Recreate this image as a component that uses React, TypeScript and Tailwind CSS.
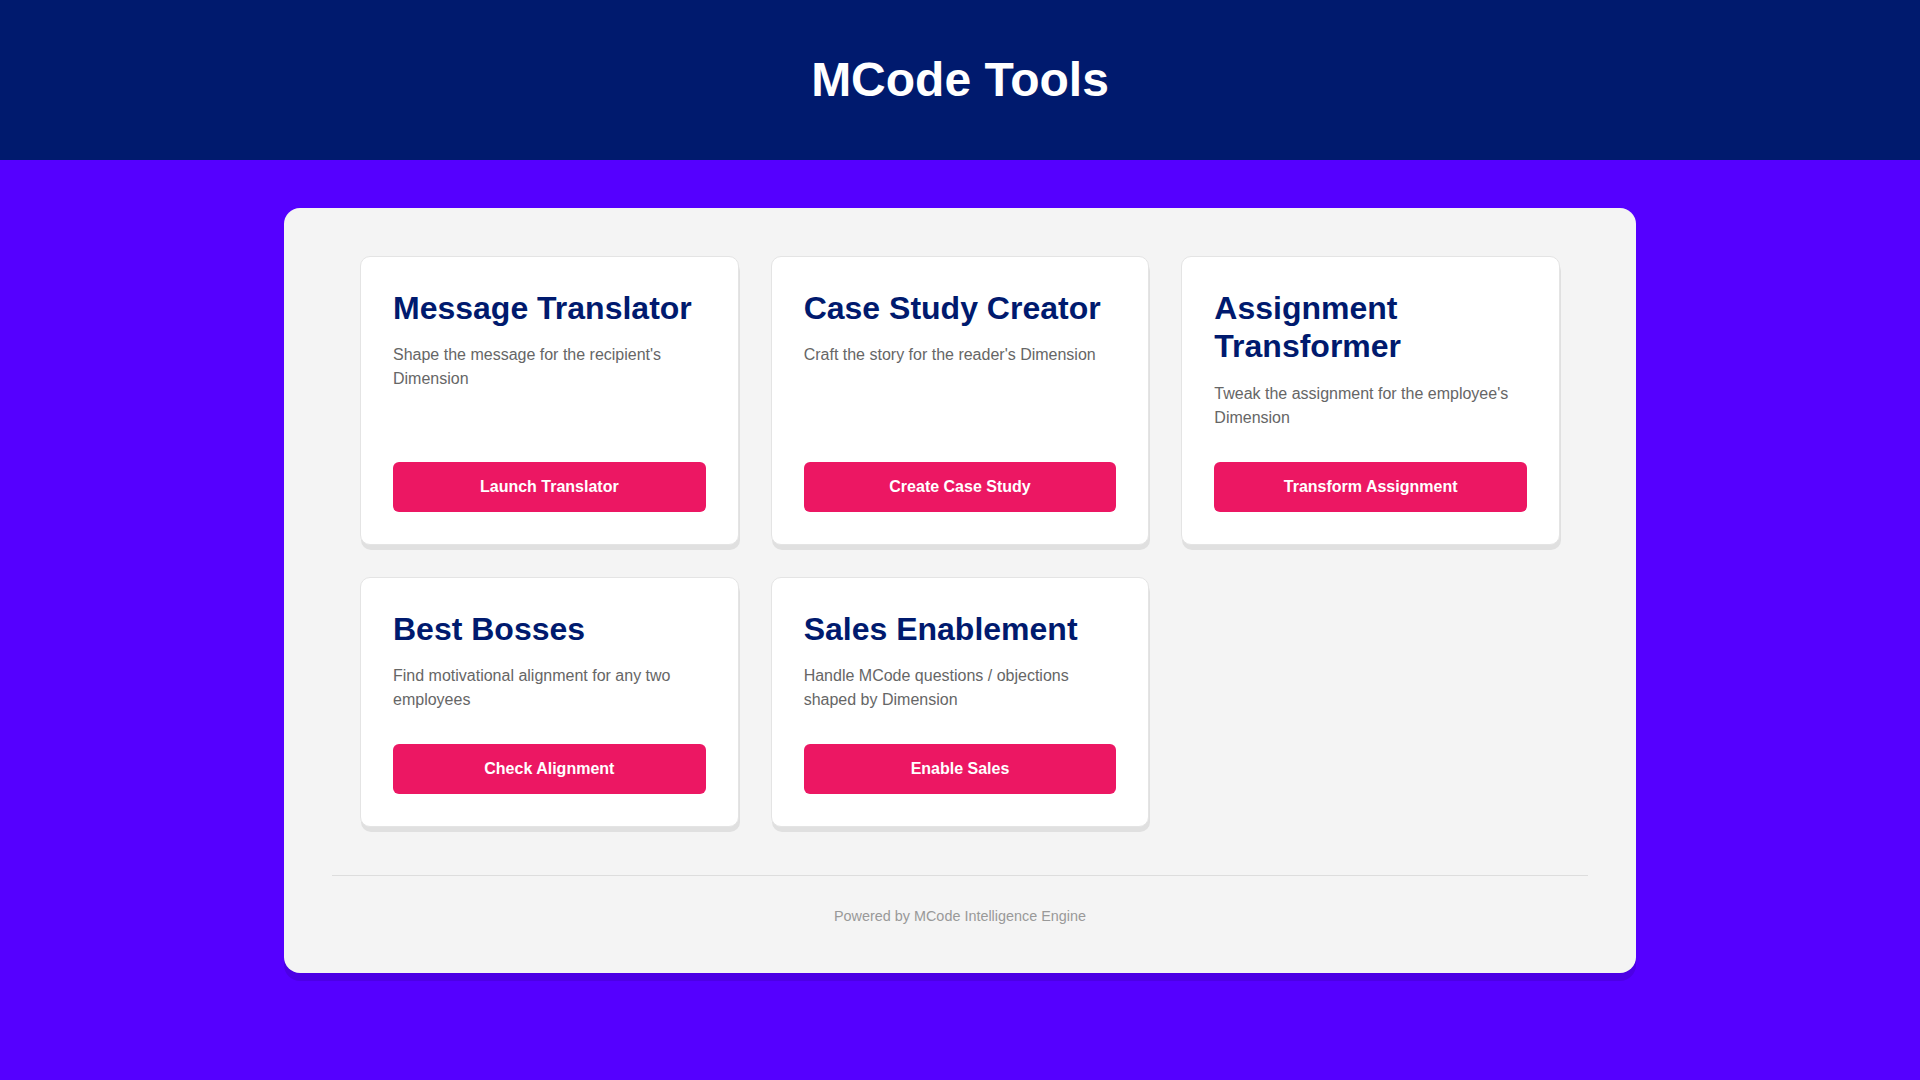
import React from "react";

const tools = [
  {
    title: "Message Translator",
    desc: "Shape the message for the recipient's Dimension",
    cta: "Launch Translator",
  },
  {
    title: "Case Study Creator",
    desc: "Craft the story for the reader's Dimension",
    cta: "Create Case Study",
  },
  {
    title: "Assignment Transformer",
    desc: "Tweak the assignment for the employee's Dimension",
    cta: "Transform Assignment",
  },
  {
    title: "Best Bosses",
    desc: "Find motivational alignment for any two employees",
    cta: "Check Alignment",
  },
  {
    title: "Sales Enablement",
    desc: "Handle MCode questions / objections shaped by Dimension",
    cta: "Enable Sales",
  },
];

export default function App() {
  return (
    <div
      className="min-h-screen bg-[#5500ff] pb-12"
      style={{ fontFamily: '"Liberation Sans", Arial, sans-serif' }}
    >
      <header className="flex h-[160px] items-center justify-center bg-[#001a6e]">
        <h1 className="text-[48px] font-bold leading-[1.15] text-white">MCode Tools</h1>
      </header>

      <main className="pt-12">
        <div className="mx-auto w-[1352px] rounded-2xl bg-[#f4f4f4] p-12 shadow-[0_8px_0_rgba(0,0,0,0.1)]">
          <div className="mx-auto grid max-w-[1200px] grid-cols-3 gap-8">
            {tools.map((t) => (
              <div
                key={t.title}
                className="flex flex-col rounded-[10px] border border-[#e4e4e4] bg-white p-8 shadow-[1px_5px_0_#e0e0e0]"
              >
                <h2 className="mb-4 text-[32px] font-bold leading-[1.2] text-[#001a6e]">
                  {t.title}
                </h2>
                <p className="mb-8 text-base leading-6 text-[#666666]">{t.desc}</p>
                <button className="mt-auto flex h-[50px] w-full items-center justify-center rounded-md bg-[#ec1763] text-base font-bold text-white">
                  {t.cta}
                </button>
              </div>
            ))}
          </div>

          <footer className="mt-12 border-t border-[#dddddd] pt-8 text-center text-[14.4px] leading-[1.15] text-[#999999]">
            Powered by MCode Intelligence Engine
          </footer>
        </div>
      </main>
    </div>
  );
}
